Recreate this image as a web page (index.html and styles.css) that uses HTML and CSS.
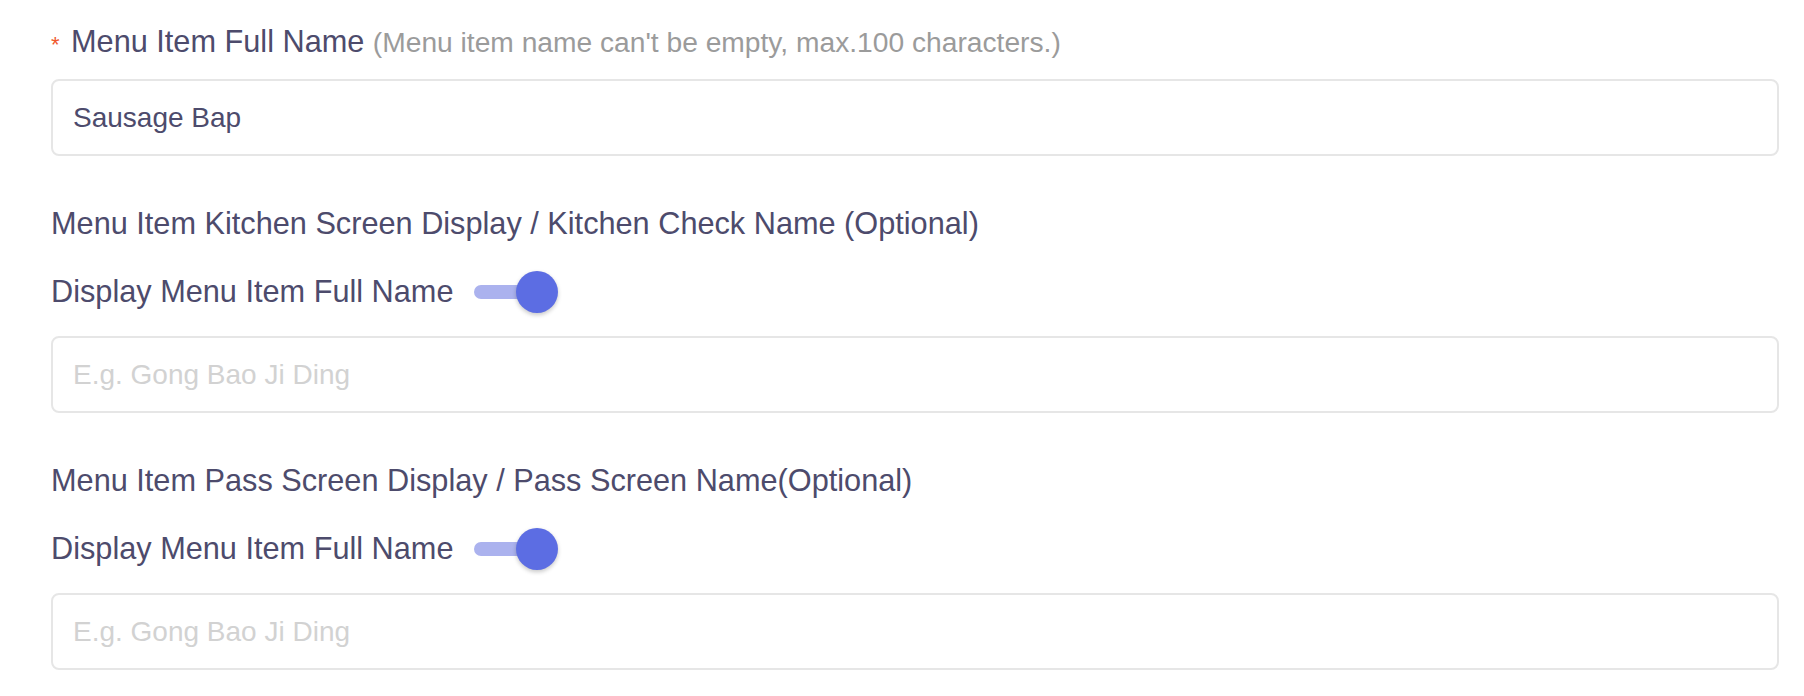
FILE: index.html
```html
<!DOCTYPE html>
<html lang="en">
  <head>
    <meta charset="UTF-8" />
    <meta name="viewport" content="width=device-width, initial-scale=1.0" />
    <title>Menu Item</title>
    <link rel="stylesheet" href="styles.css">
  </head>
  <body>
    <div class="container">
      <form class="item_form">
        <div class="form_group first">
          <label class="form_label">
            <span class="required">*</span>Menu Item Full Name
            <span class="hint">(Menu item name can't be empty, max.100 characters.)</span>
          </label>
          <input type="text" class="form-control" name="fullName" value="Sausage Bap">
        </div>

        <div class="form_group">
          <label class="form_label">Menu Item Kitchen Screen Display / Kitchen Check Name (Optional)</label>
          <div class="switch_row">
            <span>Display Menu Item Full Name</span>
            <span class="switch on"><span class="knob"></span></span>
          </div>
          <input type="text" class="form-control" name="kitchenName" placeholder="E.g. Gong Bao Ji Ding">
        </div>

        <div class="form_group">
          <label class="form_label">Menu Item Pass Screen Display / Pass Screen Name(Optional)</label>
          <div class="switch_row">
            <span>Display Menu Item Full Name</span>
            <span class="switch on"><span class="knob"></span></span>
          </div>
          <input type="text" class="form-control" name="passName" placeholder="E.g. Gong Bao Ji Ding">
        </div>
      </form>
    </div>
  </body>
</html>
```

FILE: styles.css
```css
* {
    margin: 0;
    padding: 0;
    box-sizing: border-box;
}

body {
    background: #fff;
    font-family: "Liberation Sans", Arial, sans-serif;
    color: #4d4b6c;
}

.container {
    padding: 22px 25px 0 51px;
}

.item_form {
    width: 1728px;
}

.form_group {
    margin-top: 48px;
}

.form_group.first {
    margin-top: 0;
}

.form_label {
    display: block;
    font-size: 30.7px;
    line-height: 40px;
    color: #4d4b6c;
}

.form_group.first .form_label {
    margin-bottom: 17px;
}

.required {
    display: inline-block;
    width: 20px;
    font-size: 22px;
    line-height: 1;
    color: #f0582e;
}

.hint {
    font-size: 28.2px;
    color: #9b9b9b;
}

.switch_row {
    display: flex;
    align-items: center;
    height: 42px;
    margin: 27px 0 23px;
    font-size: 30.7px;
}

.switch {
    position: relative;
    width: 84px;
    height: 42px;
    margin-left: 21px;
}

.switch::before {
    content: "";
    position: absolute;
    left: 0;
    top: 14px;
    width: 76px;
    height: 14px;
    border-radius: 7px;
    background: #abb2ee;
}

.switch .knob {
    position: absolute;
    right: 0;
    top: 0;
    width: 42px;
    height: 42px;
    border-radius: 50%;
    background: #5c6de3;
    box-shadow: 0 2px 4px rgba(0, 0, 0, 0.22);
}

.form-control {
    display: block;
    width: 100%;
    height: 77px;
    padding: 0 20px;
    border: 2px solid #e6e6e6;
    border-radius: 8px;
    background: #fff;
    font-family: inherit;
    font-size: 28px;
    color: #4d4b6c;
    outline: none;
}

.form-control::placeholder {
    color: #d2d2d2;
}
```
